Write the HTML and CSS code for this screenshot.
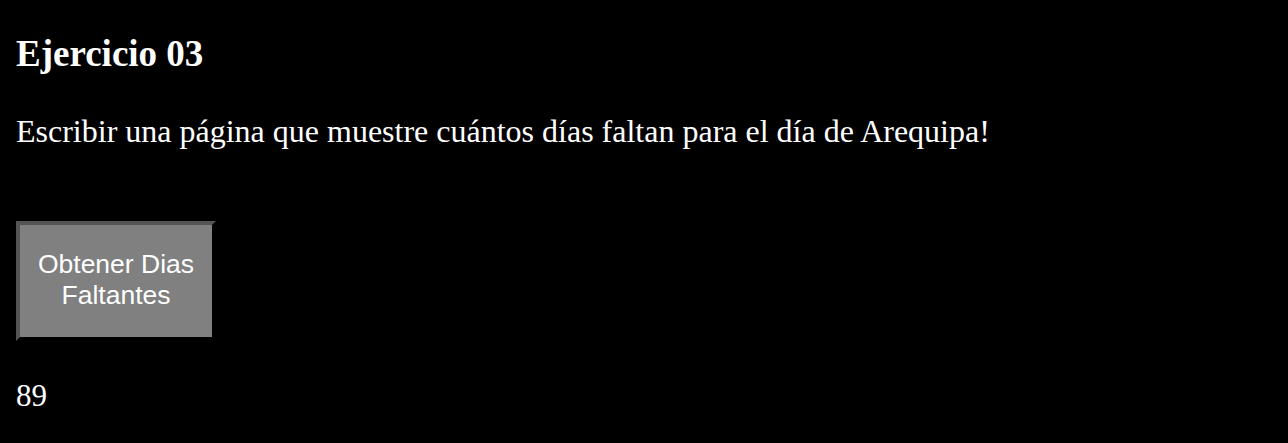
FILE: index.html
```html
<!DOCTYPE html>
<html lang="es">
<head>
<meta charset="utf-8">
<title>Ejercicio 03</title>
<link rel="stylesheet" href="styles.css">
</head>
<body>
<h1 class="title">Ejercicio 03</h1>
<p class="desc">Escribir una página que muestre cuántos días faltan para el día de Arequipa!</p>
<button class="btn" type="button">Obtener Dias Faltantes</button>
<div class="result">89</div>
</body>
</html>
```
FILE: styles.css
```css
html, body {
  background: #000;
}
body {
  margin: 0;
  padding: 0 16px;
  color: #fff;
  font-family: "Liberation Serif", "Times New Roman", serif;
}
.title {
  margin: 33px 0 0;
  font-size: 37px;
  line-height: 42px;
  font-weight: bold;
}
.desc {
  margin: 38px 0 0;
  font-size: 32px;
  line-height: 37px;
}
.btn {
  display: block;
  margin-top: 71px;
  width: 200px;
  height: 120px;
  box-sizing: border-box;
  padding: 0 8px 2px;
  background: #808080;
  color: #fff;
  border: 4px outset #000;
  font-family: "Liberation Sans", Arial, sans-serif;
  font-size: 26.5px;
  line-height: normal;
  text-align: center;
}
.result {
  margin-top: 36px;
  font-size: 31px;
  line-height: 37px;
}
```
